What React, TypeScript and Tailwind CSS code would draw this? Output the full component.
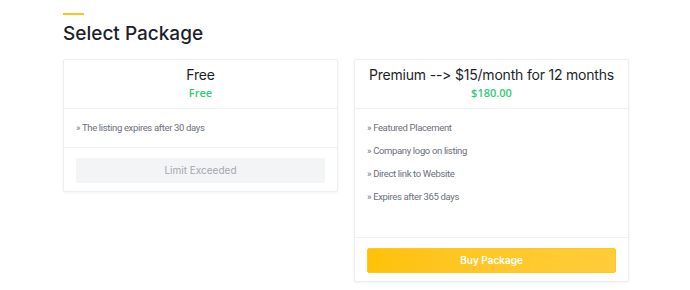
const heading = {
  fontFamily: "Inter, 'Noto Sans', sans-serif",
  fontFeatureSettings: '"calt" 0, "liga" 0',
};
const body = { fontFamily: "Roboto, 'Open Sans', sans-serif" };

type Pkg = {
  name: string;
  price: string;
  features: string[];
  listClass: string;
  available: boolean;
};

const packages: Pkg[] = [
  {
    name: "Free",
    price: "Free",
    features: ["The listing expires after 30 days"],
    listClass: "",
    available: false,
  },
  {
    name: "Premium --> $15/month for 12 months",
    price: "$180.00",
    features: [
      "Featured Placement",
      "Company logo on listing",
      "Direct link to Website",
      "Expires after 365 days",
    ],
    listClass: "min-h-[129px]",
    available: true,
  },
];

function PackageCard({ pkg }: { pkg: Pkg }) {
  return (
    <div className="bg-white border border-[#eceef2] rounded-[2px] shadow-[0_1px_3px_rgba(0,0,0,0.05)]">
      <div className="pt-[5px] pb-[7px] text-center border-b border-[#eef0f3]">
        <div style={heading} className="text-[14px] leading-[20px] tracking-[-0.2px] text-[#1c1f2a]">
          {pkg.name}
        </div>
        <div
          style={{ fontFamily: "'Open Sans', sans-serif" }}
          className="text-[11px] leading-[16px] font-semibold text-[#2ecc71]"
        >
          {pkg.price}
        </div>
      </div>
      <ul
        style={body}
        className={`px-3 pt-[11px] pb-[11px] flex flex-col gap-[7px] border-b border-[#eef0f3] ${pkg.listClass}`}
      >
        {pkg.features.map((f) => (
          <li key={f} className="text-[9.5px] leading-[16px] tracking-[-0.35px] text-[#6b6f7b]">
            » {f}
          </li>
        ))}
      </ul>
      <div className="px-3 pt-[8px] pb-[8px]">
        {pkg.available ? (
          <button
            style={heading}
            className="w-full h-[25px] rounded-[2px] bg-gradient-to-r from-[#ffc107] to-[#ffcd3a] border border-[#ffc720] text-white text-[10px] font-semibold"
          >
            Buy Package
          </button>
        ) : (
          <button
            style={heading}
            className="w-full h-[25px] rounded-[2px] bg-[#f3f4f6] text-[#a3a7b0] text-[10px]"
          >
            Limit Exceeded
          </button>
        )}
      </div>
    </div>
  );
}

export default function App() {
  return (
    <div className="w-[690px] h-[290px] bg-white overflow-hidden">
      <div className="pl-[63px] w-[629px] pt-[13px]">
        <div className="w-[21px] h-[2px] bg-[#fcc419]" />
        <h2 style={heading} className="mt-[7px] text-[19px] leading-[24px] font-medium text-[#1c1f2a]">
          Select Package
        </h2>
        <div className="mt-[13px] grid grid-cols-2 gap-[16px] items-start">
          {packages.map((p) => (
            <PackageCard key={p.name} pkg={p} />
          ))}
        </div>
      </div>
    </div>
  );
}
